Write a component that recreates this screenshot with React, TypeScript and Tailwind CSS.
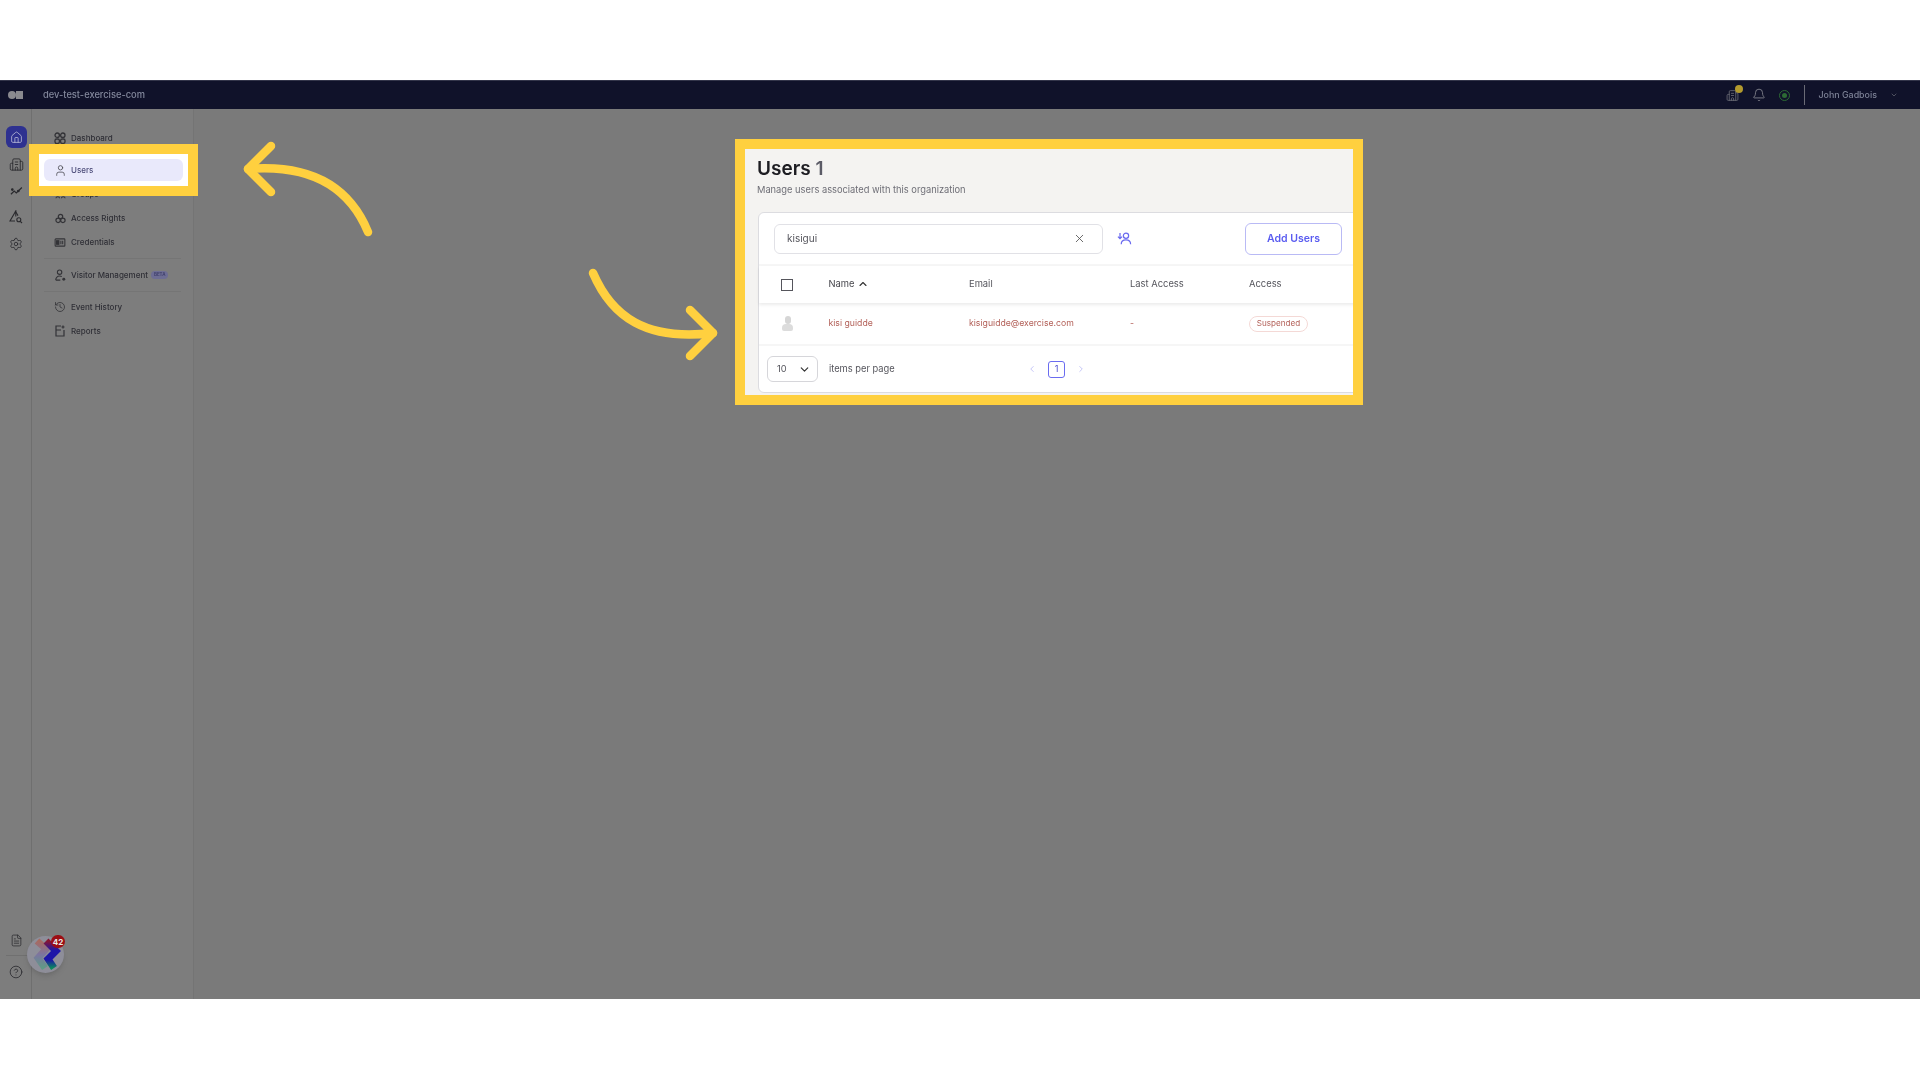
import { Bell, Building2, ChevronDown, ChevronLeft, ChevronRight, ChevronUp, CircleHelp, FileText, History, Home, Settings, User, X } from 'lucide-react';
import type { ReactNode } from 'react';

const font = { fontFamily: 'Inter, "Liberation Sans", sans-serif' };

function GridIcon() {
    return (
        <svg width="12" height="12" viewBox="0 0 12 12" fill="none" stroke="#333337" strokeWidth="1.3">
            <circle cx="3.2" cy="3.2" r="2.2" />
            <circle cx="8.8" cy="3.2" r="2.2" />
            <rect x="1" y="7" width="4.4" height="4.4" rx="1.6" />
            <rect x="6.6" y="7" width="4.4" height="4.4" rx="1.6" />
        </svg>
    );
}

function GroupIcon() {
    return (
        <svg width="11" height="11" viewBox="0 0 12 12" fill="none" stroke="#333337" strokeWidth="1.1">
            <rect x="1" y="2" width="4" height="4" />
            <rect x="7" y="2" width="4" height="4" />
            <path d="M1 10c0-2 4-2 4 0M7 10c0-2 4-2 4 0" />
        </svg>
    );
}

function AccessIcon() {
    return (
        <svg width="11" height="11" viewBox="0 0 12 12" fill="none" stroke="#333337" strokeWidth="1.3">
            <circle cx="6" cy="3.8" r="2.4" />
            <circle cx="3.4" cy="8" r="2.4" />
            <circle cx="8.6" cy="8" r="2.4" />
        </svg>
    );
}

function CredentialIcon() {
    return (
        <svg width="12" height="9" viewBox="0 0 12 10" fill="none" stroke="#333337" strokeWidth="1.2">
            <rect x="0.6" y="1" width="10.8" height="8" rx="0.8" />
            <rect x="2.2" y="3" width="2.6" height="4" fill="#333337" />
            <path d="M7 3v4M9 3v4" />
        </svg>
    );
}

function VisitorIcon() {
    return (
        <svg width="11" height="13" viewBox="0 0 12 14" fill="none" stroke="#333337" strokeWidth="1.2">
            <circle cx="5" cy="3.4" r="2.4" />
            <path d="M0.8 12c0-3 2-4.4 4.2-4.4 1 0 1.8 0.2 2.4 0.6M0.8 12h5" />
            <circle cx="9.6" cy="11" r="1.6" fill="#333337" stroke="none" />
        </svg>
    );
}

function ReportIcon() {
    return (
        <svg width="10" height="12" viewBox="0 0 10 12" fill="none" stroke="#333337" strokeWidth="1.2">
            <path d="M6 1H1v10h8V5" />
            <path d="M1 5h5M8 0.5v3M6.5 2h3" />
        </svg>
    );
}

function TrendIcon() {
    return (
        <svg width="13" height="10" viewBox="0 0 14 10" fill="none" stroke="#2a2a2e" strokeWidth="1.3">
            <path d="M1 8.5 4.500 5 6.800 7 12.800 1.200" />
            <circle cx="9" cy="5" r="0.8" fill="#2a2a2e" />
            <circle cx="2.500" cy="3.500" r="0.8" fill="#2a2a2e" />
        </svg>
    );
}

function AlertSearchIcon() {
    return (
        <svg width="14" height="14" viewBox="0 0 14 14" fill="none" stroke="#2a2a2e" strokeWidth="1.1">
            <path d="M6.800 6.400V1L1 11h5" />
            <path d="M6.200 1 9 5.600" />
            <circle cx="9.800" cy="9.800" r="2" />
            <path d="m11.300 11.300 1.700 1.700" />
        </svg>
    );
}

function NavRow({ icon, label, extra, className }: { icon: ReactNode; label: string; extra?: ReactNode; className?: string }) {
    return (
        <div className={`flex h-[24px] items-center pl-[20px] ${className ?? ''}`}>
            <div className="flex w-[16px] justify-center">{icon}</div>
            <span className="ml-[3px] text-[8px] font-medium text-[#2f2f36]">{label}</span>
            {extra}
        </div>
    );
}

function CurvedArrowLeft() {
    return (
        <svg className="absolute left-[230px] top-[130px]" width="160" height="120" viewBox="0 0 160 120" fill="none" stroke="#ffd03f" strokeWidth="8.500" strokeLinecap="round" strokeLinejoin="round">
            <path d="M138 102C119 56 80 34 18 39" />
            <path d="M41 16 18 39 41 62" />
        </svg>
    );
}

function CurvedArrowRight() {
    return (
        <svg className="absolute left-[580px] top-[255px]" width="150" height="115" viewBox="0 0 150 115" fill="none" stroke="#ffd03f" strokeWidth="8.500" strokeLinecap="round" strokeLinejoin="round">
            <path d="M13 18C32 62 66 86 133 78" />
            <path d="M110 55 133 78 110 101" />
        </svg>
    );
}

function AvatarLogo() {
    return (
        <div className="absolute left-[27px] top-[936px] h-[37px] w-[37px] rounded-full bg-[#8e8e99] shadow-md">
            <svg className="h-full w-full overflow-hidden rounded-full blur-[0.7px]" viewBox="0 0 37 37" fill="none">
                <defs>
                    <linearGradient id="zigBack" x1="0" y1="0" x2="0" y2="1">
                        <stop offset="0" stopColor="#a86a60" />
                        <stop offset="0.5" stopColor="#7c75a0" />
                        <stop offset="1" stopColor="#5f9a85" />
                    </linearGradient>
                    <linearGradient id="zigFront" x1="0" y1="0" x2="0" y2="1">
                        <stop offset="0" stopColor="#8a1630" />
                        <stop offset="0.35" stopColor="#1d16a8" />
                        <stop offset="0.7" stopColor="#1d16a8" />
                        <stop offset="1" stopColor="#0a8a5c" />
                    </linearGradient>
                </defs>
                <path d="M10 5 19 13 11 22 18 32" stroke="url(#zigBack)" strokeWidth="7" />
                <path d="M19 5 29 15 21 23 27 32" stroke="url(#zigFront)" strokeWidth="7" />
            </svg>
            <span className="absolute right-[-1px] top-[-1px] flex h-[13px] w-[14px] items-center justify-center rounded-full bg-[#9c0d14] text-[8px] font-bold text-[#e8e8e8]">42</span>
        </div>
    );
}

function SidebarHighlight() {
    return (
        <div className="absolute left-[29px] top-[144px] h-[52px] w-[169px] border-[10px] border-[#ffd03f] bg-white p-[5px]">
            <div className="flex h-full items-center rounded-md bg-[#e9e9fb] pl-[10px] blur-[0.4px]">
                <User size={13} color="#4b4b52" strokeWidth={1.5} />
                <span className="ml-[4px] text-[8px] font-medium text-[#4b4b78]">Users</span>
            </div>
        </div>
    );
}

function UsersPanel() {
    const cols = 'grid grid-cols-[69.5px_140.5px_161px_119px_1fr] items-center';

    return (
        <div className="absolute left-[735px] top-[139px] h-[266px] w-[628px] border-[10px] border-[#ffd03f]">
            <div className="flex h-full flex-col overflow-hidden bg-[#f4f3f1] pl-3">
                <div className="blur-[0.4px]">
                    <h1 className="mt-[8px] text-[19px] font-semibold leading-[24px] text-[#1d1d22]">
                        Users <span className="text-[#5b5b66]">1</span>
                    </h1>
                    <p className="mt-[2px] text-[9.300px] leading-[14px] text-[#6e6e76]">Manage users associated with this organization</p>
                </div>

                <div className="ml-px mt-[15px] h-[181px] w-[640px] shrink-0 rounded-md border-[1.5px] border-[#dcdce0] bg-white">
                    <div className="blur-[0.4px]">
                        <div className="flex h-[51px] w-[583px] items-center pl-[15px]">
                            <div className="flex h-[30px] w-[329px] items-center justify-between rounded-md border-[1.5px] border-[#e1e1e6] pl-[12px] pr-[16px] text-[10px] text-[#55555c]">
                                kisigui
                                <X size={13} color="#555" strokeWidth={1.6} />
                            </div>
                            <svg className="ml-[14px]" width="15" height="15" viewBox="0 0 16 16" fill="none" stroke="#6a6aef" strokeWidth="1.3">
                                <circle cx="9.600" cy="5" r="2.800" />
                                <path d="M4.500 14c0-3 2.400-4.600 5-4.600s5 1.600 5 4.600" />
                                <path d="M3.200 2v6M1 6l2.200 2.200L5.400 6" />
                            </svg>
                            <button className="ml-auto h-[32px] w-[97px] rounded-md border-[1.5px] border-[#b9baf5] text-[10.500px] font-semibold text-[#5a5cf0]">Add Users</button>
                        </div>
                        <div className="h-[2px] w-[640px] bg-[#f6f6f6]"></div>

                        <div className={`${cols} h-[37px] text-[9.400px] text-[#55555c] shadow-[0_2px_3px_rgba(0,0,0,0.08)]`}>
                            <div className="pl-[22px]">
                                <div className="h-[12px] w-[12px] border-[1.5px] border-[#55555c]"></div>
                            </div>
                            <div className="flex items-center gap-[2px] text-[#46464c]">
                                Name <ChevronUp size={12} color="#333" strokeWidth={2.2} />
                            </div>
                            <div>Email</div>
                            <div>Last Access</div>
                            <div>Access</div>
                        </div>

                        <div className={`${cols} h-[43px] border-b-2 border-[#f6f6f6] text-[8.700px] text-[#b25f57]`}>
                            <div className="flex flex-col items-start pl-[23px]">
                                <div className="ml-[2.500px] h-[8px] w-[6px] rounded-full bg-[#d6d6d6]"></div>
                                <div className="h-[7px] w-[11px] rounded-t-[4px] rounded-b-[2px] bg-[#dcdcdc]"></div>
                            </div>
                            <div>kisi guidde</div>
                            <div>kisiguidde@exercise.com</div>
                            <div>-</div>
                            <div>
                                <span className="inline-block h-[16px] w-[59px] rounded-full border-[1.5px] border-[#f4d9d6] text-center text-[8.100px] leading-[13px]">Suspended</span>
                            </div>
                        </div>

                        <div className="flex h-[46px] items-center pl-[8px] text-[9.300px] text-[#55555c]">
                            <div className="flex h-[26px] w-[51px] items-center justify-between rounded-md border-[1.5px] border-[#d6d6da] pl-[9px] pr-[6px]">
                                10
                                <ChevronDown size={13} color="#333" strokeWidth={2.2} />
                            </div>
                            <span className="ml-[11px] w-[198px]">items per page</span>
                            <ChevronLeft size={10} color="#b9baf5" strokeWidth={2} />
                            <div className="ml-[11px] flex h-[17px] w-[17px] items-center justify-center rounded-[3px] border-[1.5px] border-[#6a6cf0] text-[9px] text-[#4b4bd0]">1</div>
                            <ChevronRight className="ml-[11px]" size={10} color="#b9baf5" strokeWidth={2} />
                        </div>
                    </div>
                </div>
            </div>
        </div>
    );
}

export default function App() {
    return (
        <div className="relative h-[1080px] w-[1920px] overflow-hidden bg-white" style={font}>
            <div className="h-[80px]"></div>

            <header className="flex h-[29px] items-center border-t border-[#33354a] bg-[#10122a]">
                <div className="ml-[8px] flex items-center blur-[0.4px]">
                    <div className="h-[8px] w-[8px] rounded-full bg-[#8a8a8f]"></div>
                    <div className="h-[8px] w-[7px] bg-[#8a8a8f]"></div>
                </div>
                <span className="ml-[20px] text-[9.300px] font-medium text-[#83889c] blur-[0.4px]">dev-test-exercise-com</span>

                <div className="ml-auto flex items-center blur-[0.4px]">
                    <div className="relative">
                        <Building2 size={13} color="#6d6e78" strokeWidth={1.5} />
                        <span className="absolute left-[9px] top-[-4px] h-[8px] w-[8px] rounded-full bg-[#b39a2e]"></span>
                    </div>
                    <Bell className="ml-[13px]" size={14} color="#85868f" strokeWidth={1.5} />
                    <div className="ml-[13px] flex h-[11px] w-[11px] items-center justify-center rounded-full border border-[#2c6a34]">
                        <div className="h-[5px] w-[5px] rounded-full bg-[#2c6a34]"></div>
                    </div>
                    <div className="ml-[14px] h-[20px] w-px bg-[#6a6b76]"></div>
                    <span className="ml-[13px] text-[8.900px] font-medium text-[#7d8296]">John Gadbois</span>
                    <ChevronDown className="ml-[13px] mr-[22px]" size={8} color="#6d6e78" strokeWidth={2} />
                </div>
            </header>

            <div className="flex h-[890px]">
                <aside className="flex w-[32px] shrink-0 flex-col items-center border-r border-[#6f6f6f] bg-[#7d7d7d] pl-px pt-[17px]">
                    <div className="flex h-[22px] w-[21px] items-center justify-center rounded-md bg-[#2e3190]">
                        <Home size={13} color="#b9bad8" strokeWidth={1.5} />
                    </div>
                    <div className="mt-[4px] flex h-[24px] w-full items-center justify-center blur-[0.3px]">
                        <Building2 size={15} color="#2a2a2e" strokeWidth={1.4} />
                    </div>
                    <div className="mt-[3px] flex h-[24px] w-full items-center justify-center blur-[0.3px]">
                        <TrendIcon />
                    </div>
                    <div className="mt-[2px] flex h-[24px] w-full items-center justify-center blur-[0.3px]">
                        <AlertSearchIcon />
                    </div>
                    <div className="mt-[3px] flex h-[24px] w-full items-center justify-center blur-[0.3px]">
                        <Settings size={14} color="#2a2a2e" strokeWidth={1.4} />
                    </div>
                    <div className="mt-auto flex h-[14px] w-full items-center justify-center">
                        <FileText size={13} color="#2a2a2e" strokeWidth={1.4} />
                    </div>
                    <div className="ml-[5px] mt-[8px] h-px w-[26px] bg-[#707070]"></div>
                    <div className="mb-[20px] mt-[9px] flex h-[14px] w-full items-center justify-center">
                        <CircleHelp size={14} color="#2a2a2e" strokeWidth={1.4} />
                    </div>
                </aside>

                <nav className="w-[162px] shrink-0 border-r border-[#747474] bg-[#7d7d7d] pt-[17px]">
                    <div className="blur-[0.3px]">
                        <NavRow icon={<GridIcon />} label="Dashboard" />
                        <div className="mt-[9px] h-[21px]"></div>
                        <NavRow className="mt-[2px]" icon={<GroupIcon />} label="Groups" />
                        <NavRow icon={<AccessIcon />} label="Access Rights" />
                        <NavRow icon={<CredentialIcon />} label="Credentials" />
                        <div className="mx-[12px] mt-[4px] h-px bg-[#757575]"></div>
                        <NavRow
                            className="mt-[4px]"
                            icon={<VisitorIcon />}
                            label="Visitor Management"
                            extra={<span className="ml-[3px] rounded-full bg-[#6d6d94] px-[3px] text-[4.500px] font-semibold leading-[8px] text-[#3d3d6a]">BETA</span>}
                        />
                        <div className="mx-[12px] mt-[4px] h-px bg-[#757575]"></div>
                        <NavRow className="mt-[3px]" icon={<History size={12} color="#333337" strokeWidth={1.6} />} label="Event History" />
                        <NavRow icon={<ReportIcon />} label="Reports" />
                    </div>
                </nav>

                <main className="flex-1 bg-[#7a7a7a]"></main>
            </div>

            <AvatarLogo />
            <SidebarHighlight />
            <CurvedArrowLeft />
            <CurvedArrowRight />
            <UsersPanel />
        </div>
    );
}
